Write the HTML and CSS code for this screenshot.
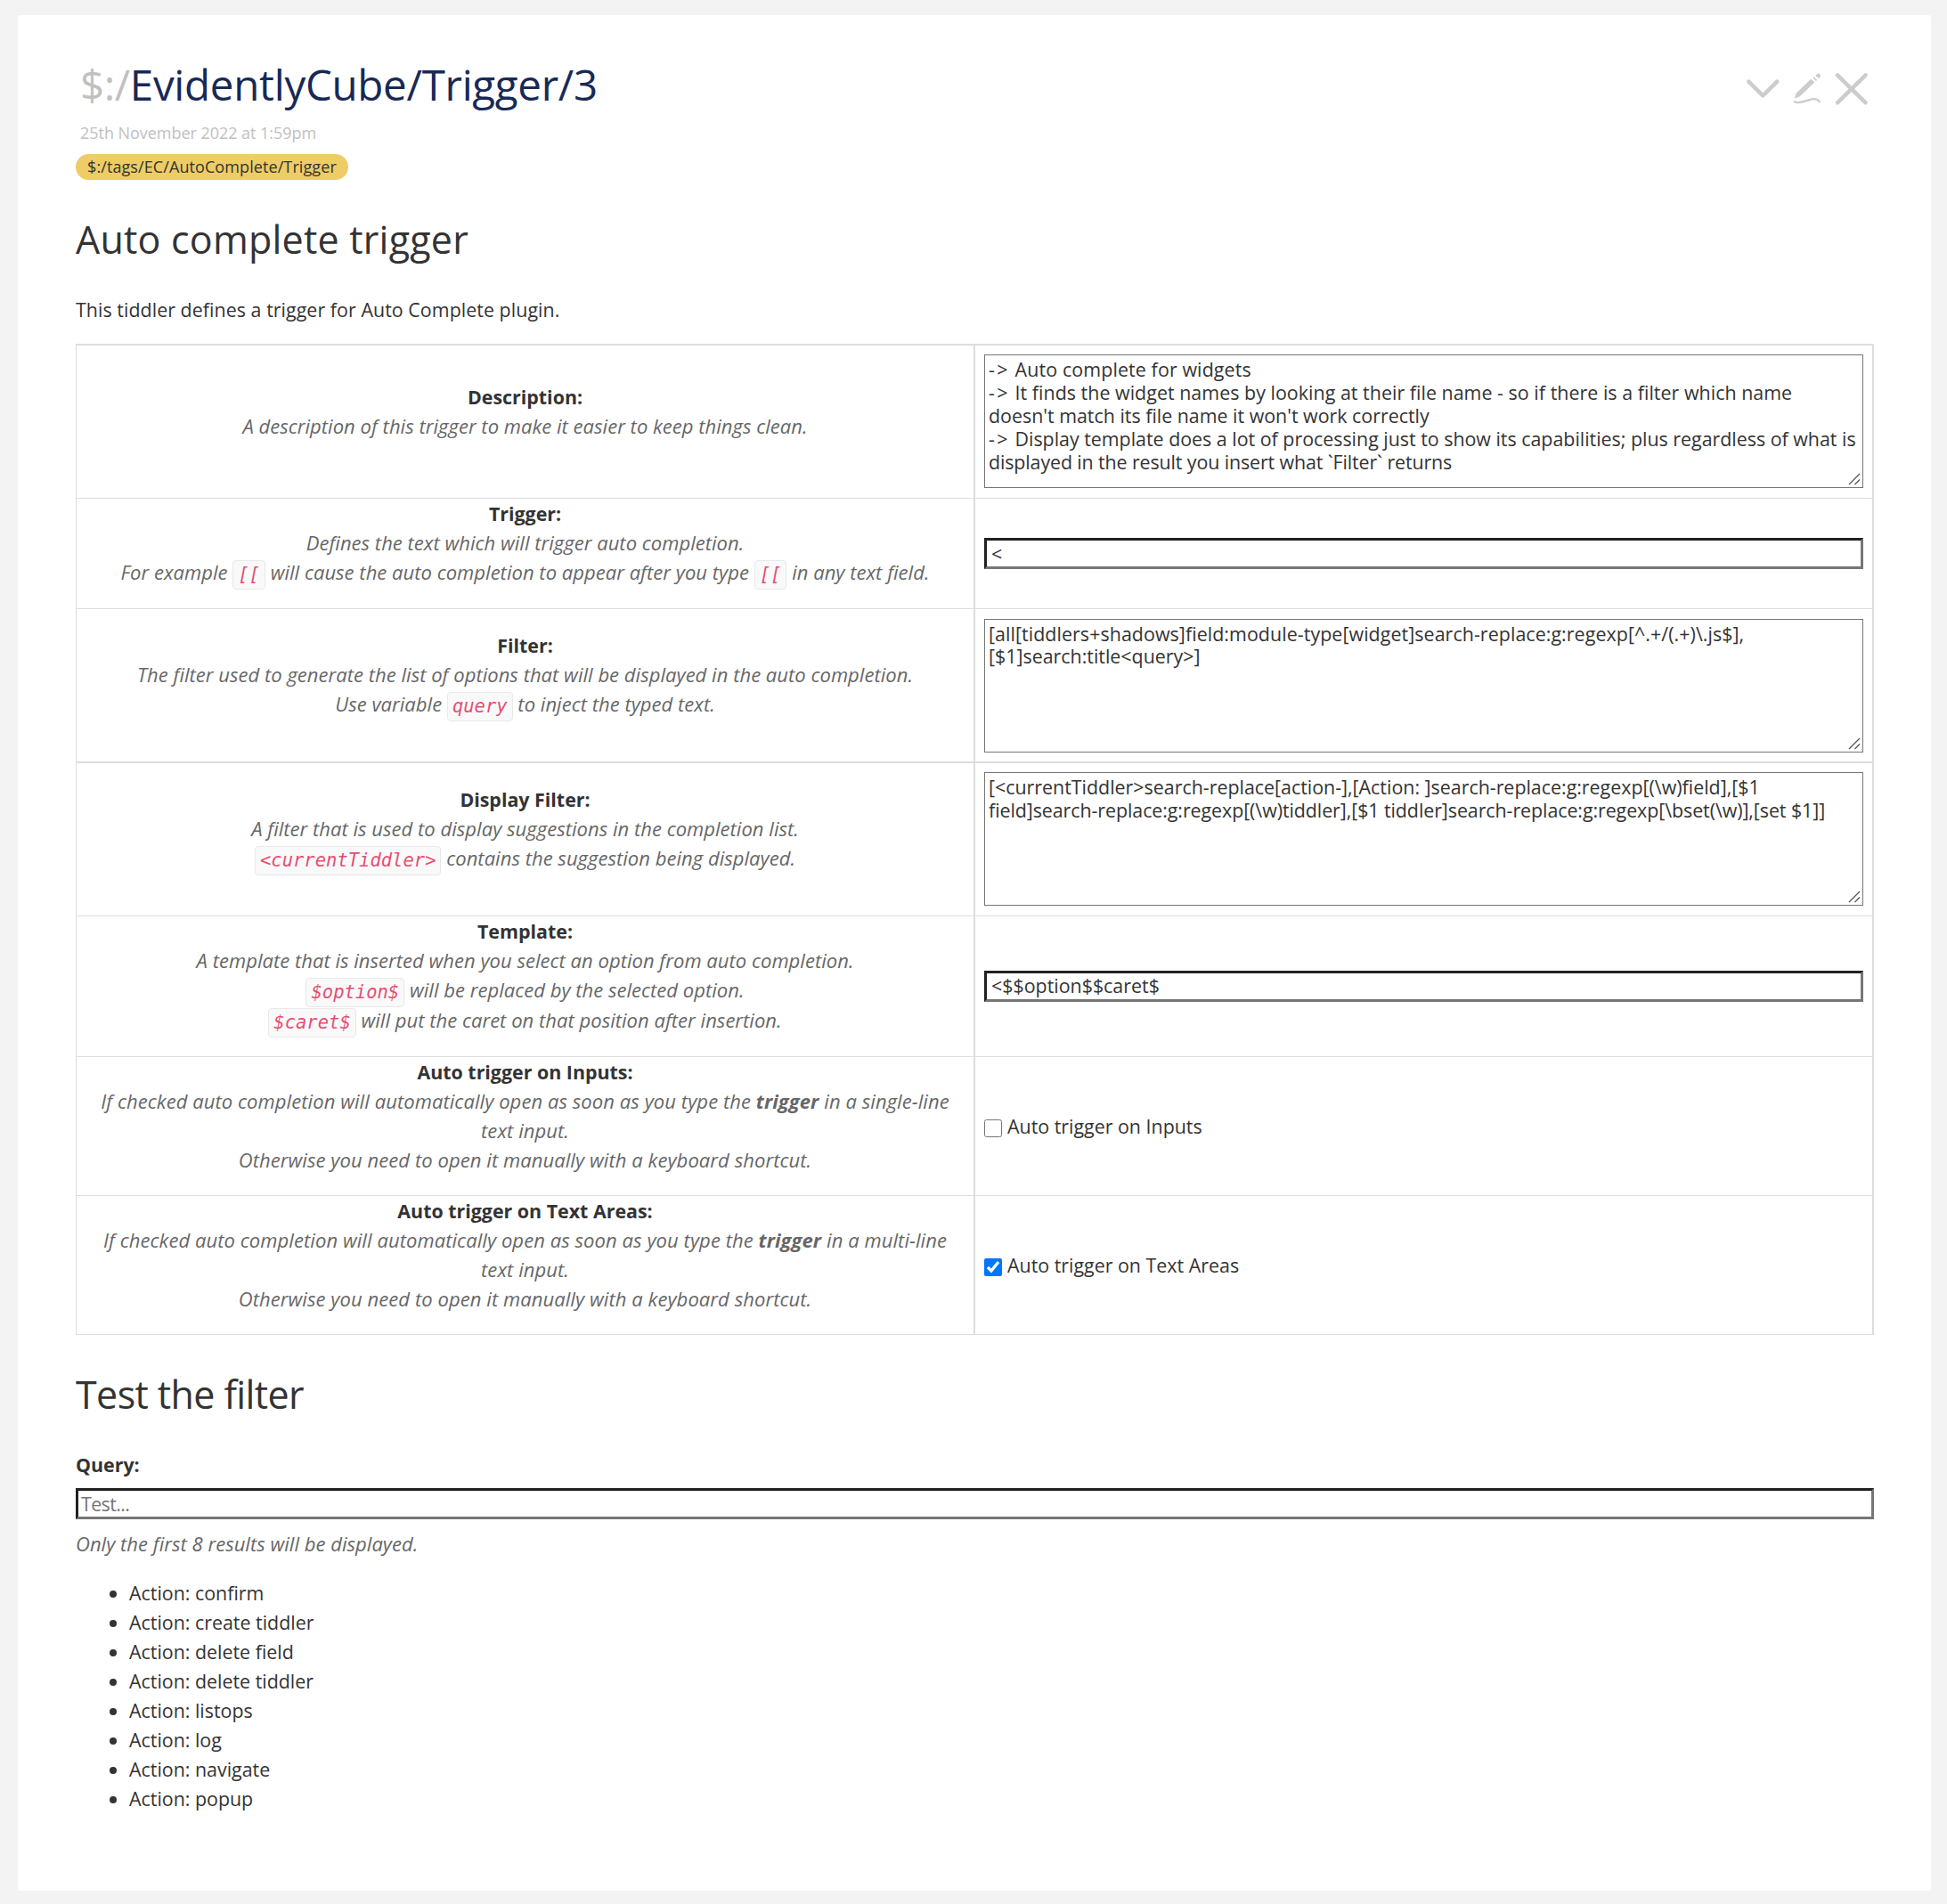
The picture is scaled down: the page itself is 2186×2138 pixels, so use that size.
FILE: index.html
```
<!DOCTYPE html>
<html lang="en">
<head>
<meta charset="utf-8">
<title>$:/EvidentlyCube/Trigger/3</title>
<link rel="stylesheet" href="styles.css">
</head>
<body>
<article class="tiddler">
  <header class="titlebar">
    <h2 class="title"><span class="prefix">$:/</span>EvidentlyCube/Trigger/3</h2>
    <div class="controls">
      <svg class="icon" viewBox="0 0 50 50"><path class="line" d="M9.3 16.7L25.3 32.4L41.2 16.7"/></svg>
      <svg class="icon" viewBox="0 0 50 50">
        <path class="fill" d="M11 35.6L12.4 30.6Q12.8 29.6 13.6 28.8L28.6 14.2Q29.3 13.6 30 14.2L32.7 16.7Q33.3 17.4 32.7 18L17.6 32.6Q16.8 33.3 15.9 33.7Z"/>
        <path class="thin" d="M32 11.9L35.6 15.3"/>
        <path class="fill" d="M34.6 9.9Q36.4 7.2 38.4 7.6Q40.6 8.8 39.8 11Q39.2 12.2 38 13Z"/>
        <path class="stroke" d="M11 39.3C18 42.4 25 36.6 32 36.2C35.500 36.100 37.500 37 38.800 39.200"/>
      </svg>
      <svg class="icon" viewBox="0 0 50 50"><path class="line" d="M9 9.3L40.600 40.300M40.600 9.300L9 40.300"/></svg>
    </div>
  </header>
  <div class="date">25th November 2022 at 1:59pm</div>
  <div class="tags"><span class="tag">$:/tags/EC/AutoComplete/Trigger</span></div>

  <h1 class="heading">Auto complete trigger</h1>
  <p class="intro">This tiddler defines a trigger for Auto Complete plugin.</p>

  <table class="config">
    <tr class="row-description">
      <td class="label"><strong>Description:</strong><br><em>A description of this trigger to make it easier to keep things clean.</em></td>
      <td class="value"><div class="area"><div class="looser"><span class="arrow">-&gt;</span> Auto complete for widgets</div><div class="loose"><span class="arrow">-&gt;</span> It finds the widget names by looking at their file name - so if there is a filter which name</div><div>doesn't match its file name it won't work correctly</div><div class="slight"><span class="arrow">-&gt;</span> Display template does a lot of processing just to show its capabilities; plus regardless of what is</div><div class="tight">displayed in the result you insert what `Filter` returns</div><svg class="grip" viewBox="0 0 14 14"><path d="M1 13L13 1M7.500 13L13 7.500"/></svg></div></td>
    </tr>
    <tr class="row-trigger">
      <td class="label"><strong>Trigger:</strong><br><em>Defines the text which will trigger auto completion.<br>For example <code>[[</code> will cause the auto completion to appear after you type <code>[[</code> in any text field.</em></td>
      <td class="value"><input class="field" type="text" value="&lt;"></td>
    </tr>
    <tr class="row-filter">
      <td class="label"><strong>Filter:</strong><br><em>The filter used to generate the list of options that will be displayed in the auto completion.<br>Use variable <code>query</code> to inject the typed text.</em></td>
      <td class="value"><div class="area"><div class="wide">[all[tiddlers+shadows]field:module-type[widget]search-replace:g:regexp[^.+/(.+)\.js$],</div><div>[$1]search:title&lt;query&gt;]</div><svg class="grip" viewBox="0 0 14 14"><path d="M1 13L13 1M7.500 13L13 7.500"/></svg></div></td>
    </tr>
    <tr class="row-display">
      <td class="label"><strong>Display Filter:</strong><br><em>A filter that is used to display suggestions in the completion list.<br><code>&lt;currentTiddler&gt;</code> contains the suggestion being displayed.</em></td>
      <td class="value"><div class="area"><div>[&lt;currentTiddler&gt;search-replace[action-],[Action: ]search-replace:g:regexp[(\w)field],[$1</div><div class="snug">field]search-replace:g:regexp[(\w)tiddler],[$1 tiddler]search-replace:g:regexp[\bset(\w)],[set $1]]</div><svg class="grip" viewBox="0 0 14 14"><path d="M1 13L13 1M7.500 13L13 7.500"/></svg></div></td>
    </tr>
    <tr class="row-template">
      <td class="label"><strong>Template:</strong><br><em>A template that is inserted when you select an option from auto completion.<br><code>$option$</code> will be replaced by the selected option.<br><code>$caret$</code> will put the caret on that position after insertion.</em></td>
      <td class="value"><input class="field" type="text" value="&lt;$$option$$caret$"></td>
    </tr>
    <tr class="row-auto">
      <td class="label"><strong>Auto trigger on Inputs:</strong><br><em>If checked auto completion will automatically open as soon as you type the <b>trigger</b> in a single-line<br>text input.<br>Otherwise you need to open it manually with a keyboard shortcut.</em></td>
      <td class="value"><label class="check"><input type="checkbox">Auto trigger on Inputs</label></td>
    </tr>
    <tr class="row-auto">
      <td class="label"><strong>Auto trigger on Text Areas:</strong><br><em>If checked auto completion will automatically open as soon as you type the <b>trigger</b> in a multi-line<br>text input.<br>Otherwise you need to open it manually with a keyboard shortcut.</em></td>
      <td class="value"><label class="check"><input type="checkbox" checked>Auto trigger on Text Areas</label></td>
    </tr>
  </table>

  <h1 class="heading heading-test">Test the filter</h1>
  <div class="query"><strong>Query:</strong></div>
  <input class="field field-query" type="text" placeholder="Test...">
  <div class="note"><em>Only the first 8 results will be displayed.</em></div>
  <ul class="results">
    <li>Action: confirm</li>
    <li>Action: create tiddler</li>
    <li>Action: delete field</li>
    <li>Action: delete tiddler</li>
    <li>Action: listops</li>
    <li>Action: log</li>
    <li>Action: navigate</li>
    <li>Action: popup</li>
  </ul>
</article>
</body>
</html>
```
FILE: styles.css
```
* { box-sizing: border-box; }

body {
  margin: 0;
  padding: 17px 18px 15px 20px;
  background: #f3f3f3;
  color: #333;
  font: 21.4px/33px "Open Sans", "Noto Sans", sans-serif;
}

.tiddler {
  height: 2106px;
  padding: 50px 64px 0 65px;
  background: #fff;
  border-radius: 3px;
}

/* Title area */
.titlebar {
  display: flex;
  justify-content: space-between;
  height: 56px;
}
.title {
  margin: 0 0 0 5px;
  font-size: 47.5px;
  line-height: 56px;
  font-weight: 400;
  letter-spacing: -0.29px;
  color: #182955;
}
.prefix { color: #c0c0c0; letter-spacing: -0.42px; }
.controls { display: flex; padding-top: 8px; }
.icon { width: 50px; height: 50px; }
.icon path { fill: none; stroke: #ccc; stroke-linecap: round; stroke-linejoin: round; }
.icon .line { stroke-width: 4.5; }
.icon .thin { stroke-width: 1.6; stroke-linecap: butt; }
.icon .stroke { stroke-width: 2.3; }
.icon .fill { fill: #ccc; stroke: none; }

.date {
  margin: 14px 0 0 5px;
  font-size: 18px;
  line-height: 24px;
  letter-spacing: -0.04px;
  color: #c0c0c0;
}
.tags { display: flex; margin-top: 12px; }
.tag {
  width: 306px;
  height: 29px;
  padding-left: 13px;
  border-radius: 15px;
  background: #ec6;
  font-size: 18px;
  line-height: 29px;
  letter-spacing: 0.09px;
}

.heading {
  margin: 40px 0 0;
  font-size: 43px;
  line-height: 54px;
  font-weight: 400;
  letter-spacing: 0.22px;
}
.heading-test { letter-spacing: -0.6px; }
.intro { margin: 35px 0 22px; letter-spacing: 0.05px; }

/* Settings table */
.config {
  width: 2019px;
  table-layout: fixed;
  border-collapse: separate;
  border-spacing: 0;
}
.config td {
  padding: 0;
  border: solid #ddd;
  border-width: 0 2px 1px 0;
  vertical-align: middle;
}
.config .label {
  width: 1010px;
  padding-bottom: 24px;
  border-left-width: 1px;
  text-align: center;
}
.config .value { padding: 0 10px; }
.config .row-description td { height: 174px; border-top-width: 2px; }
.row-trigger td { height: 124px; }
.config .row-filter td { height: 173px; border-bottom-width: 2px; }
.row-display td { height: 172px; }
.config .row-description .value,
.config .row-display .value { padding-bottom: 1px; }
.row-template td { height: 158px; }
.row-auto td { height: 156px; }
.config .row-trigger .label,
.config .row-template .label,
.config .row-auto .label { padding-bottom: 0; vertical-align: top; }

strong, em b { font-weight: 700; }
em { font-size: 22px; letter-spacing: 0.03px; opacity: 0.75; }
.row-auto em { letter-spacing: 0.07px; }

code {
  display: inline-block;
  height: 33px;
  margin: -3px 0 -2.5px;
  padding: 0 5px;
  border: 1px solid #e1e1e8;
  border-radius: 4px;
  background: #f7f7f9;
  color: #d14;
  font: italic 20.5px/31px "DejaVu Sans Mono", monospace;
  letter-spacing: 0;
  vertical-align: -1px;
}

.area {
  position: relative;
  height: 150px;
  padding: 3px 4px;
  border: 1px solid #767676;
  line-height: 25.875px;
  white-space: nowrap;
}
.arrow { letter-spacing: 2.4px; }
.wide { letter-spacing: 0.07px; }
.loose { letter-spacing: 0.04px; }
.looser { letter-spacing: 0.12px; }
.slight { letter-spacing: -0.005px; }
.snug { letter-spacing: -0.065px; }
.tight { letter-spacing: -0.11px; }
.grip { position: absolute; right: 2px; bottom: 2px; width: 14px; height: 14px; }
.grip path { fill: none; stroke: #555; stroke-width: 1.3; }

.field {
  display: block;
  width: 100%;
  height: 35px;
  padding: 0 5px 1px;
  border: 3px solid;
  border-color: #212121 #767676 #767676 #212121;
  background: #fff;
  color: #333;
  font: inherit;
}
.row-template .field { padding-bottom: 2px; }
.field-query { margin-top: 10px; padding-left: 3px; }
.field::placeholder { color: #757575; letter-spacing: -0.6px; }

.check { display: flex; align-items: center; gap: 6px; }
.check input { width: 20px; height: 20px; margin: 5px 0 0; }

/* Filter test */
.query { margin-top: 35px; }
.note { margin-top: 11px; }
.results { margin: 22px 0 0; padding: 0 0 0 60px; }
```
